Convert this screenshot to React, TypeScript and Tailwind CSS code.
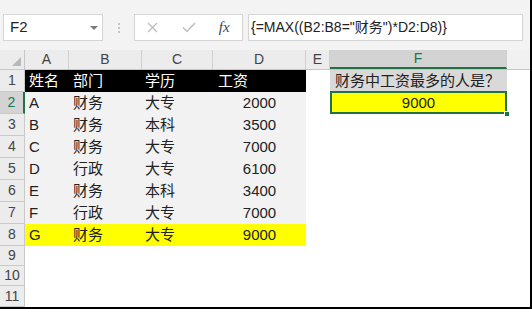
import React from "react";

const FONT = "font-['Liberation_Sans','Noto_Sans_CJK_SC',sans-serif]";

const cols = ["A", "B", "C", "D", "E", "F"];

const data: string[][] = [
  ["姓名", "部门", "学历", "工资"],
  ["A", "财务", "大专", "2000"],
  ["B", "财务", "本科", "3500"],
  ["C", "财务", "大专", "7000"],
  ["D", "行政", "大专", "6100"],
  ["E", "财务", "本科", "3400"],
  ["F", "行政", "大专", "7000"],
  ["G", "财务", "大专", "9000"],
];

const rowHeights = ["h-[22px]", "h-[22px]", "h-[22px]", "h-[22px]", "h-[22px]", "h-[22px]", "h-[22px]", "h-[22px]", "h-[20px]", "h-[20px]", "h-[21px]"];

const FormulaBar = () => (
  <div className="flex h-[50px] items-start bg-[#f3f3f3] pt-[14px]">
    <div className="ml-[3px] flex h-[27px] w-[100px] items-center justify-between border border-[#d5d5d5] bg-white pl-[6px] pr-[4px]">
      <span className="text-[15px] text-[#222]">F2</span>
      <span className="h-0 w-0 border-x-[4px] border-t-[4px] border-x-transparent border-t-[#7a7a7a]" />
    </div>
    <div className="flex h-[27px] w-[31px] flex-col items-center justify-center gap-[2px]">
      <span className="h-[2px] w-[2px] bg-[#c4c4c4]" />
      <span className="h-[2px] w-[2px] bg-[#c4c4c4]" />
      <span className="h-[2px] w-[2px] bg-[#c4c4c4]" />
    </div>
    <div className="flex h-[27px] w-[109px] items-center border border-[#d5d5d5] bg-white">
      <div className="flex w-[36px] justify-center">
        <svg width="11" height="11" viewBox="0 0 11 11">
          <path d="M1 1L10 10M10 1L1 10" stroke="#bdbdbd" strokeWidth="1.3" fill="none" />
        </svg>
      </div>
      <div className="flex w-[36px] justify-center">
        <svg width="14" height="11" viewBox="0 0 14 11">
          <path d="M1 5.5L5 9.5L13 1" stroke="#bdbdbd" strokeWidth="1.4" fill="none" />
        </svg>
      </div>
      <div className="flex w-[36px] justify-center">
        <span className="font-['Liberation_Serif',serif] text-[15px] italic text-[#444]">fx</span>
      </div>
    </div>
    <div className="ml-[5px] flex h-[27px] w-[275px] items-center border border-[#d5d5d5] bg-white pl-[2px]">
      <span className="text-[14px] text-[#222]">{'{=MAX((B2:B8="财务")*D2:D8)}'}</span>
    </div>
  </div>
);

const HeaderRow = () => (
  <div className="flex h-[20px] border-b border-[#c6c6c6] bg-[#ececec] text-[14px] text-[#444]">
    <div className="relative w-[25px] border-r border-[#c6c6c6]">
      <span className="absolute bottom-[3px] right-[3px] h-0 w-0 border-b-[9px] border-l-[9px] border-b-[#b9b9b9] border-l-transparent" />
    </div>
    {cols.map((c, i) => {
      const widths = ["w-[44px]", "w-[73px]", "w-[71px]", "w-[93px]", "w-[24px]", "w-[177px]"];
      const active = c === "F";
      return (
        <div
          key={c}
          className={
            widths[i] +
            " flex items-center justify-center border-r border-[#d0d0d0] " +
            (active ? "border-b-2 border-b-[#217346] bg-[#d3d3d3] text-[#217346]" : "")
          }
        >
          {c}
        </div>
      );
    })}
    <div className="flex-1 bg-[#f1f1f1]" />
  </div>
);

const Row = ({ idx }: { idx: number }) => {
  const r = data[idx];
  const isTitle = idx === 0;
  const isYellow = idx === 7;
  const fill = isTitle
    ? "bg-black text-white"
    : isYellow
    ? "bg-[#ffff00] text-[#222]"
    : r
    ? "bg-[#f2f2f2] text-[#222]"
    : "bg-white";
  const rowActive = idx === 1;
  return (
    <div className={"flex " + rowHeights[idx]}>
      <div
        className={
          "flex w-[25px] items-center justify-center border-b border-r border-[#c9c9c9] text-[14px] " +
          (rowActive ? "border-r-2 border-r-[#217346] bg-[#d3d3d3] text-[#217346]" : "bg-[#ececec] text-[#444]")
        }
      >
        {idx + 1}
      </div>
      <div className={"flex w-[281px] " + fill}>
        <div className="flex w-[44px] items-center pl-[4px]">{r?.[0]}</div>
        <div className="flex w-[73px] items-center pl-[4px]">{r?.[1]}</div>
        <div className="flex w-[71px] items-center pl-[3px]">{r?.[2]}</div>
        <div className={"flex w-[93px] items-center " + (isTitle ? "pl-[5px]" : "justify-center")}>{r?.[3]}</div>
      </div>
      <div className="w-[24px] bg-white" />
      {idx === 0 ? (
        <div className="flex w-[177px] items-center bg-[#d9d9d9] pl-[5px] text-[#222]">财务中工资最多的人是？</div>
      ) : idx === 1 ? (
        <div className="relative flex w-[177px] items-center justify-center bg-[#ffff00] text-[#222]">
          9000
          <span className="absolute -top-[1px] bottom-0 left-0 right-0 border-2 border-[#217346]" />
          <span className="absolute -bottom-[3px] -right-[3px] h-[6px] w-[6px] border border-white bg-[#217346]" />
        </div>
      ) : (
        <div className="w-[177px] bg-white" />
      )}
      <div className="flex-1 bg-white" />
    </div>
  );
};

export default function App() {
  return (
    <div className={"h-[309px] w-[532px] overflow-hidden border-b-2 border-r-2 border-black bg-white text-[15px] " + FONT}>
      <FormulaBar />
      <HeaderRow />
      {rowHeights.map((_, i) => (
        <Row key={i} idx={i} />
      ))}
    </div>
  );
}
